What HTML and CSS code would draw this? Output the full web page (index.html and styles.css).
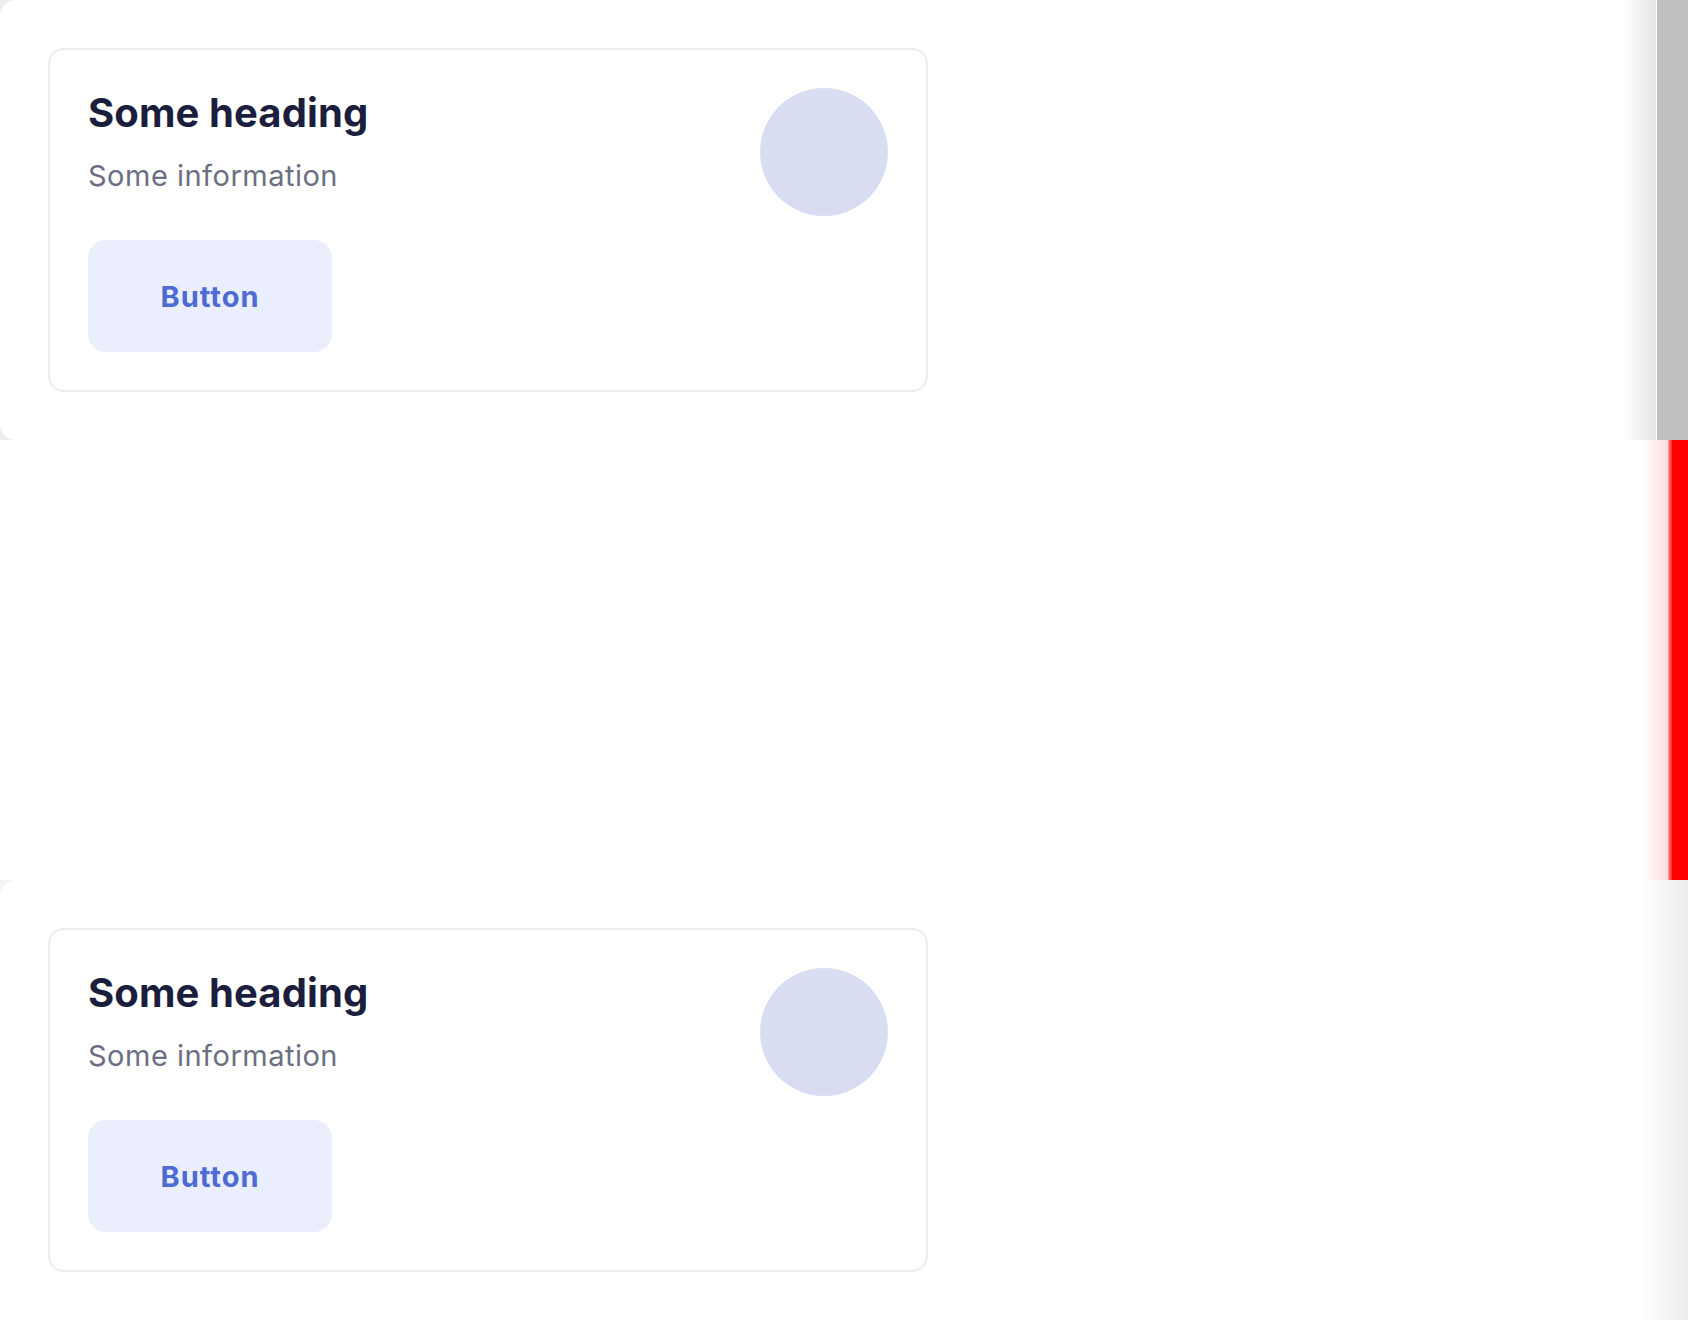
FILE: index.html
```html
<!DOCTYPE html>
<html lang="en">
<head>
<meta charset="utf-8">
<title>Cards</title>
<link rel="stylesheet" href="styles.css">
</head>
<body>
  <section class="row row-first">
    <div class="panel panel-first">
      <div class="card">
        <div class="card-text">
          <h2 class="card-heading">Some heading</h2>
          <p class="card-info">Some information</p>
          <button class="card-button">Button</button>
        </div>
        <div class="card-avatar"></div>
      </div>
    </div>
    <div class="gap-line"></div>
    <div class="strip strip-gray"></div>
  </section>

  <section class="row row-middle">
    <div class="blank"></div>
    <div class="strip strip-red"></div>
  </section>

  <section class="row row-last">
    <div class="panel panel-last">
      <div class="card">
        <div class="card-text">
          <h2 class="card-heading">Some heading</h2>
          <p class="card-info">Some information</p>
          <button class="card-button">Button</button>
        </div>
        <div class="card-avatar"></div>
      </div>
    </div>
  </section>
</body>
</html>
```

FILE: styles.css
```css
* {
  box-sizing: border-box;
}

html, body {
  margin: 0;
  padding: 0;
  background: #ffffff;
}

body {
  font-family: Inter, "Noto Sans", "Liberation Sans", sans-serif;
  width: 1688px;
  height: 1320px;
  overflow: hidden;
}

.row {
  display: flex;
  height: 440px;
}

.row-first {
  background: #efefef;
}

.panel {
  flex: 1;
  padding: 48px;
  background-color: #ffffff;
}

.panel-first {
  border-radius: 16px 0 0 16px;
  background-image: linear-gradient(to left, #e6e6e6 0, rgba(255, 255, 255, 0) 32px);
}

.gap-line {
  width: 1px;
  background: #ffffff;
}

.strip {
  flex: none;
}

.strip-gray {
  width: 31px;
  background: #c0c0c0;
}

.row-middle {
  background: #ffffff;
}

.blank {
  flex: 1;
  background-image: linear-gradient(to left, #ffdcdc 0, rgba(255, 255, 255, 0) 26px);
}

.strip-red {
  width: 20px;
  background: linear-gradient(to right, #ffb4b4 0, #ff4a4a 2px, #ff3030 4px, #ff0000 4px);
}

.row-last {
  background: #f3f3f3;
}

.panel-last {
  border-radius: 16px 0 0 0;
  background-image: linear-gradient(to left, #ececec 0, rgba(255, 255, 255, 0) 48px);
}

.card {
  width: 880px;
  height: 344px;
  border: 2px solid #ededed;
  border-radius: 16px;
  background: #ffffff;
  padding: 38px;
  display: flex;
  justify-content: space-between;
  align-items: flex-start;
}

.card-text {
  display: flex;
  flex-direction: column;
  align-items: flex-start;
}

.card-heading {
  margin: 1px 0 0;
  font-size: 40px;
  line-height: 48px;
  font-weight: 700;
  color: #1b1e3d;
  letter-spacing: 0.1px;
}

.card-info {
  margin: 17px 0 0;
  font-size: 29px;
  line-height: 44px;
  font-weight: 400;
  color: #6c6f83;
  letter-spacing: 0.5px;
}

.card-button {
  margin-top: 42px;
  width: 244px;
  height: 112px;
  border: none;
  border-radius: 18px;
  background: #ebeefd;
  color: #4d6bd3;
  font-family: inherit;
  font-size: 29px;
  font-weight: 700;
  letter-spacing: 1px;
  padding: 0;
  cursor: pointer;
}

.card-avatar {
  width: 128px;
  height: 128px;
  border-radius: 50%;
  background: #d9ddf1;
  flex: none;
}
```
